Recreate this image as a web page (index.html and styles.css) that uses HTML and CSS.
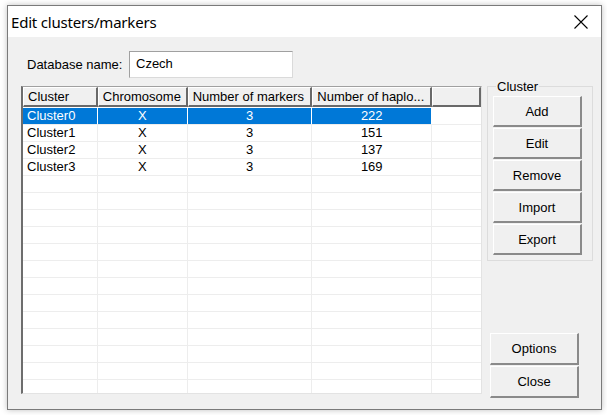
FILE: index.html
```html
<!DOCTYPE html>
<html>
<head>
<meta charset="utf-8">
<link rel="stylesheet" href="styles.css">
</head>
<body>
<div class="window">
  <div class="titlebar">
    <span class="title">Edit clusters/markers</span>
    <svg class="close" width="16" height="16" viewBox="0 0 16 16"><path d="M1.5 1.5 L14.5 14.5 M14.5 1.5 L1.5 14.5" stroke="#000" stroke-width="1.1" fill="none"/></svg>
  </div>
  <div class="client">
    <div class="dbrow">
      <span class="label">Database name:</span>
      <div class="textbox">Czech</div>
    </div>
    <div class="main">
      <div class="listview">
        <div class="header">
          <div class="hcell c1">Cluster</div>
          <div class="hcell c2">Chromosome</div>
          <div class="hcell c3">Number of markers</div>
          <div class="hcell c4">Number of haplo...</div>
          <div class="hcell c5"></div>
        </div>
        <div class="rows">
          <div class="row selected"><div class="cell c1 left">Cluster0</div><div class="cell c2">X</div><div class="cell c3">3</div><div class="cell c4">222</div><div class="cell c5"></div></div>
          <div class="row"><div class="cell c1 left">Cluster1</div><div class="cell c2">X</div><div class="cell c3">3</div><div class="cell c4">151</div><div class="cell c5"></div></div>
          <div class="row"><div class="cell c1 left">Cluster2</div><div class="cell c2">X</div><div class="cell c3">3</div><div class="cell c4">137</div><div class="cell c5"></div></div>
          <div class="row"><div class="cell c1 left">Cluster3</div><div class="cell c2">X</div><div class="cell c3">3</div><div class="cell c4">169</div><div class="cell c5"></div></div>
          <div class="row"><div class="cell c1"></div><div class="cell c2"></div><div class="cell c3"></div><div class="cell c4"></div><div class="cell c5"></div></div>
          <div class="row"><div class="cell c1"></div><div class="cell c2"></div><div class="cell c3"></div><div class="cell c4"></div><div class="cell c5"></div></div>
          <div class="row"><div class="cell c1"></div><div class="cell c2"></div><div class="cell c3"></div><div class="cell c4"></div><div class="cell c5"></div></div>
          <div class="row"><div class="cell c1"></div><div class="cell c2"></div><div class="cell c3"></div><div class="cell c4"></div><div class="cell c5"></div></div>
          <div class="row"><div class="cell c1"></div><div class="cell c2"></div><div class="cell c3"></div><div class="cell c4"></div><div class="cell c5"></div></div>
          <div class="row"><div class="cell c1"></div><div class="cell c2"></div><div class="cell c3"></div><div class="cell c4"></div><div class="cell c5"></div></div>
          <div class="row"><div class="cell c1"></div><div class="cell c2"></div><div class="cell c3"></div><div class="cell c4"></div><div class="cell c5"></div></div>
          <div class="row"><div class="cell c1"></div><div class="cell c2"></div><div class="cell c3"></div><div class="cell c4"></div><div class="cell c5"></div></div>
          <div class="row"><div class="cell c1"></div><div class="cell c2"></div><div class="cell c3"></div><div class="cell c4"></div><div class="cell c5"></div></div>
          <div class="row"><div class="cell c1"></div><div class="cell c2"></div><div class="cell c3"></div><div class="cell c4"></div><div class="cell c5"></div></div>
          <div class="row"><div class="cell c1"></div><div class="cell c2"></div><div class="cell c3"></div><div class="cell c4"></div><div class="cell c5"></div></div>
          <div class="row"><div class="cell c1"></div><div class="cell c2"></div><div class="cell c3"></div><div class="cell c4"></div><div class="cell c5"></div></div>
          <div class="row"><div class="cell c1"></div><div class="cell c2"></div><div class="cell c3"></div><div class="cell c4"></div><div class="cell c5"></div></div>
        </div>
      </div>
      <div class="side">
        <fieldset class="group">
          <legend>Cluster</legend>
          <button class="btn">Add</button>
          <button class="btn">Edit</button>
          <button class="btn">Remove</button>
          <button class="btn">Import</button>
          <button class="btn">Export</button>
        </fieldset>
        <div class="bottom-buttons">
          <button class="btn">Options</button>
          <button class="btn">Close</button>
        </div>
      </div>
    </div>
  </div>
</div>
</body>
</html>
```

FILE: styles.css
```css
* { box-sizing: border-box; }
html, body { margin: 0; padding: 0; }
body {
  background: #ffffff;
  width: 607px;
  height: 415px;
  overflow: hidden;
  font-family: "Liberation Sans", Arial, sans-serif;
  font-size: 13px;
  color: #000;
}
.window {
  margin: 5px 0 0 7px;
  width: 595px;
  height: 405px;
  border: 1px solid #7a7a7a;
  background: #f0f0f0;
  box-shadow: 0 0 6px rgba(0,0,0,0.25);
  display: flex;
  flex-direction: column;
}
.titlebar {
  height: 31px;
  background: #fff;
  display: flex;
  align-items: center;
  justify-content: space-between;
  padding: 0 12px 0 3px;
  flex: none;
}
.title {
  font-family: "Noto Sans", "Open Sans", sans-serif;
  font-size: 15px;
  color: #000;
  letter-spacing: -0.2px;
}
.close { display: block; }
.client {
  flex: 1;
  display: flex;
  flex-direction: column;
  padding: 14px 8px 0 13px;
}
.dbrow {
  display: flex;
  align-items: center;
  height: 27px;
  padding-left: 6px;
  flex: none;
}
.label { width: 102px; }
.textbox {
  width: 164px;
  height: 27px;
  background: #fff;
  border: 1px solid #dadada;
  border-top-color: #a0a0a0;
  border-left-color: #a0a0a0;
  padding: 4px 0 0 6px;
}
.main {
  flex: 1;
  display: flex;
  align-items: flex-start;
  margin-top: 8px;
}
.listview {
  width: 461px;
  height: 308px;
  background: #fff;
  border-style: solid;
  border-width: 1px 1px 1px 2px;
  border-color: #a0a0a0 #e3e3e3 #e3e3e3 #6d6d6d;
  overflow: hidden;
  display: flex;
  flex-direction: column;
}
.header {
  display: flex;
  height: 20px;
  flex: none;
}
.hcell {
  height: 20px;
  background: #f0f0f0;
  border-style: solid;
  border-width: 1px 2px 2px 1px;
  border-color: #fff #696969 #696969 #fff;
  padding: 1px 0 0 4px;
  white-space: nowrap;
  overflow: hidden;
}
.c1 { width: 75px; }
.c2 { width: 90px; }
.c3 { width: 125px; }
.c4 { width: 120px; }
.c5 { width: 49px; }
.rows { flex: 1; }
.row {
  display: flex;
  height: 17px;
  border-bottom: 1px solid #ededed;
}
.row:first-child { margin-top: 1px; }
.cell {
  height: 16px;
  border-right: 1px solid #ededed;
  text-align: center;
  line-height: 16px;
  white-space: nowrap;
}
.cell.left { text-align: left; padding-left: 4px; }
.cell.c5 { border-right: none; }
.row.selected .cell.c1,
.row.selected .cell.c2,
.row.selected .cell.c3,
.row.selected .cell.c4 {
  background: #0078d7;
  color: #fff;
  border-right-color: #fff;
}
.side {
  flex: 1;
  align-self: stretch;
  display: flex;
  flex-direction: column;
  padding-left: 5px;
}
.group {
  margin: -6px 0 0 0;
  width: 106px;
  height: 181px;
  border: 1px solid #dcdcdc;
  border-radius: 0;
  padding: 0 0 0 5px;
  display: flex;
  flex-direction: column;
  gap: 1px;
}
.group legend {
  padding: 0 1px;
  margin-left: 3px;
  font-size: 13px;
  line-height: 13px;
}
.btn {
  font-family: "Liberation Sans", Arial, sans-serif;
  font-size: 13px;
  color: #000;
  width: 89px;
  height: 31px;
  background: #f0f0f0;
  border-style: solid;
  border-width: 1px 2px 2px 1px;
  border-color: #fff #8a8a8a #8a8a8a #fff;
  padding: 0;
  margin: 0;
}
.group .btn:first-of-type { margin-top: 3px; }
.bottom-buttons {
  margin-top: auto;
  margin-bottom: 11px;
  display: flex;
  flex-direction: column;
  gap: 1px;
  padding-left: 3px;
}
.bottom-buttons .btn { height: 32px; }
```
